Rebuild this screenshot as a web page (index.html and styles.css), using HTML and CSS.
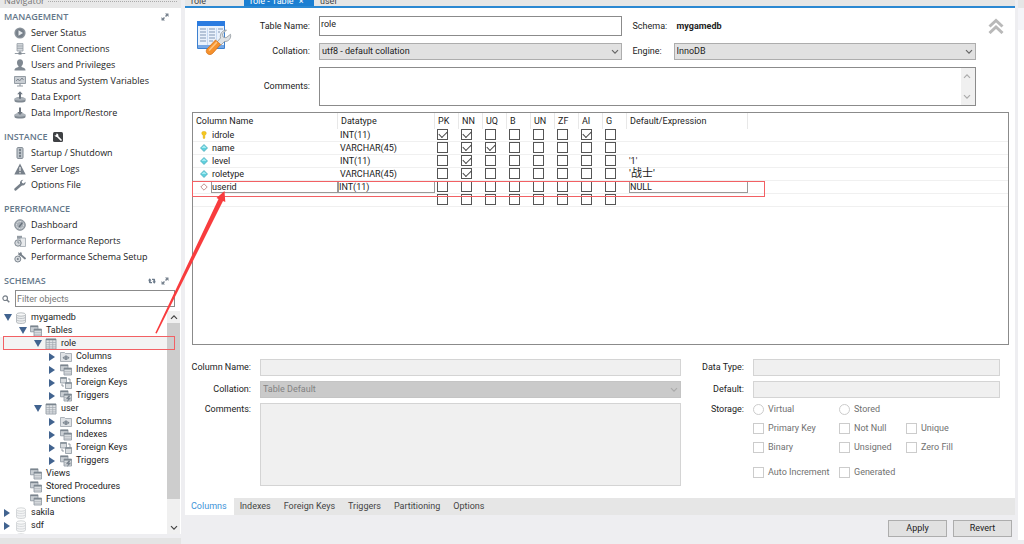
FILE: index.html
```html
<!DOCTYPE html>
<html lang="en">
<head>
  <meta charset="UTF-8">
  <meta name="viewport" content="width=device-width, initial-scale=1.0">
  <title>role - Table</title>
  <link rel="stylesheet" href="styles.css">
</head>
<body>
  <!-- icon set -->
  <svg class="sprite" aria-hidden="true">
    <symbol id="i-play" viewBox="0 0 12 12"><circle cx="6" cy="6" r="5.6" fill="#8c949c"/><circle cx="6" cy="6" r="4.2" fill="#77808a"/><path d="M4.500 3.200v5.600L9 6z" fill="#e8ebee"/></symbol>
    <symbol id="i-client" viewBox="0 0 12 12"><path d="M3 .6h6v7.400H3z" fill="#d5d9dd" stroke="#949ca4" stroke-width=".8"/><path d="M3 3h6M3 5.300h6" stroke="#949ca4" stroke-width=".8"/><path d="M6 8v2M.8 10.500h10.400" stroke="#949ca4" stroke-width="1.200"/><path d="M4.500 9.300h3v2.300h-3z" fill="#7f8891"/></symbol>
    <symbol id="i-user" viewBox="0 0 12 12"><path d="M6 .3c2 0 3 1.300 3 3.200C9 5.300 8.300 6.300 7.500 7v1c1.800.5 4 .9 4 3.500H.5c0-2.600 2.200-3 4-3.500V7C3.700 6.300 3 5.300 3 3.500 3 1.600 4 .3 6 .3z" fill="#7f8891"/></symbol>
    <symbol id="i-monitor" viewBox="0 0 12 12"><path d="M.5 1.500h11v7H.5z" fill="#c9ced3" stroke="#949ca4"/><path d="M2 6l2-2 1.500 2L8 3l1.500 2" fill="none" stroke="#77808a" stroke-width=".9"/><path d="M6 9v1.500M3 11h6" stroke="#949ca4" stroke-width="1.200"/></symbol>
    <symbol id="i-export" viewBox="0 0 12 12"><path d="M.5 8c0-2.300 11-2.300 11 0v2c0 2-11 2-11 0z" fill="#7f8891"/><ellipse cx="6" cy="8" rx="5.500" ry="1.700" fill="#aab1b8"/><path d="M6 .2l2.800 3H7v4.500H5V3.200H3.200z" fill="#6d7680"/></symbol>
    <symbol id="i-import" viewBox="0 0 12 12"><path d="M.5 8c0-2.300 11-2.300 11 0v2c0 2-11 2-11 0z" fill="#7f8891"/><ellipse cx="6" cy="8" rx="5.500" ry="1.700" fill="#aab1b8"/><path d="M6 8l2.800-3H7V.4H5V5H3.200z" fill="#6d7680"/></symbol>
    <symbol id="i-light" viewBox="0 0 12 12"><rect x="3" y=".6" width="6" height="10.800" rx="1" fill="#c3c9cf" stroke="#7f8891"/><circle cx="6" cy="3" r="1.200" fill="#77808a"/><circle cx="6" cy="6" r="1.200" fill="#77808a"/><circle cx="6" cy="9" r="1.200" fill="#77808a"/></symbol>
    <symbol id="i-warn" viewBox="0 0 12 12"><path d="M6 .5l5.700 11H.3z" fill="#77808a"/><path d="M6 4v4" stroke="#eee" stroke-width="1.300"/><circle cx="6" cy="9.700" r=".8" fill="#eee"/></symbol>
    <symbol id="i-wrench" viewBox="0 0 12 12"><path d="M1.600 10.300L7 5.500" stroke="#77808a" stroke-width="2.600" stroke-linecap="round"/><path d="M9.300.7L7.700 2.500l.4 1.500 1.500.4 1.900-1.600c.4 2-.9 3.800-3 3.700C6.200 6.400 5.500 4.400 6.200 2.700 6.800 1.400 8 .6 9.300.7z" fill="#77808a"/></symbol>
    <symbol id="i-gauge" viewBox="0 0 12 12"><circle cx="6" cy="6" r="5.300" fill="#a9b0b7" stroke="#7f8891" stroke-width=".9"/><circle cx="6" cy="6" r="3.500" fill="none" stroke="#eceef0" stroke-width="1" stroke-dasharray="1 .8"/><path d="M5 8l3.500-4.500" stroke="#66707a" stroke-width="1.300"/></symbol>
    <symbol id="i-report" viewBox="0 0 12 12"><path d="M3 .8h5v3H3z" fill="#949ca4"/><path d="M6 3h5.500v8.500H6z" fill="#e8eaec" stroke="#a0a7ae" stroke-width=".8"/><circle cx="4" cy="8" r="3.200" fill="#d5d9dd" stroke="#7f8891"/><path d="M4 6v2h1.500" fill="none" stroke="#77808a" stroke-width=".8"/></symbol>
    <symbol id="i-setup" viewBox="0 0 12 12"><circle cx="3.800" cy="8" r="3" fill="#d5d9dd" stroke="#7f8891"/><circle cx="3.800" cy="8" r="1" fill="#77808a"/><path d="M6.500 3.500l4.500 4" stroke="#77808a" stroke-width="1.800" stroke-linecap="round"/><path d="M4.500 1l1.200 1.300L7 .7 8 3 6.500 5 4.300 4z" fill="#77808a"/></symbol>
    <symbol id="i-expand" viewBox="0 0 8 8"><path d="M4 .5h3.500V4L6.300 2.800 5 4 4 3l1.200-1.300zM4 7.500H.5V4l1.200 1.200L3 4l1 1-1.200 1.300z" fill="#77828e"/></symbol>
    <symbol id="i-refresh" viewBox="0 0 9 8"><path d="M0 3.500L2 1l2 2.500H3V5h1.500v1.500H2.200C1.400 6.500 1 6 1 5.200V3.500zM9 4.500L7 7 5 4.500h1V3H4.500V1.500h2.300C7.600 1.500 8 2 8 2.800v1.700z" fill="#6b7a8a"/></symbol>
    <symbol id="i-badge" viewBox="0 0 10 10"><rect width="10" height="10" rx="1.500" fill="#3f4144"/><path d="M4 4l4 4" stroke="#fff" stroke-width="1.700" stroke-linecap="round"/><path d="M1.500 3L3 3.500 3.500 1.500C5 1.500 6 3 5.200 4.500 4 5.500 2 5 1.500 3z" fill="#fff"/></symbol>
    <symbol id="i-search" viewBox="0 0 8 8"><circle cx="3.200" cy="3.200" r="2.300" fill="none" stroke="#777f88" stroke-width="1.200"/><path d="M5 5l2.300 2.300" stroke="#777f88" stroke-width="1.500"/></symbol>
    <symbol id="i-db" viewBox="0 0 12 12"><path d="M1.500 2.500v7.500c0 2 9 2 9 0V2.500" fill="#eceeef" stroke="#a9aeb3" stroke-width=".8"/><ellipse cx="6" cy="2.500" rx="4.500" ry="1.700" fill="#f7f8f8" stroke="#a9aeb3" stroke-width=".8"/><path d="M1.500 5c0 2 9 2 9 0M1.500 7.500c0 2 9 2 9 0" fill="none" stroke="#b4b9be" stroke-width=".8"/></symbol>
    <symbol id="i-tables" viewBox="0 0 12 12"><path d="M.5.8h7.500v6H.5z" fill="#c9ced3" stroke="#8c959e" stroke-width=".8"/><path d="M.5 1.500H8" stroke="#7b858f" stroke-width="1.300"/><path d="M4 4h7.500v7H4z" fill="#d9dde0" stroke="#8c959e" stroke-width=".8"/><path d="M4 4.800h7.500" stroke="#7b858f" stroke-width="1.500"/><path d="M4 7.500h7.500M4 9.300h7.500" stroke="#a0a7ae" stroke-width=".5"/></symbol>
    <symbol id="i-table" viewBox="0 0 12 12"><path d="M1 1h10v10H1z" fill="#e0e3e6" stroke="#939ca5" stroke-width=".9"/><path d="M1 1.500h10" stroke="#7b858f" stroke-width="1.500"/><path d="M1 4.500h10M1 6.700h10M1 8.900h10M4.300 2v9M7.700 2v9" stroke="#a0a8b0" stroke-width=".7"/></symbol>
    <symbol id="i-cols" viewBox="0 0 12 12"><path d="M.5 1.500h4l1 1h6v8H.5z" fill="#dfe2e5" stroke="#9aa2aa" stroke-width=".8"/><path d="M2.500 6.700L4.700 4.700v4zM5.100 4.500h1.800V9H5.100zM9.500 6.700l-2.200-2v4z" fill="#7b858f"/></symbol>
    <symbol id="i-fk" viewBox="0 0 12 12"><path d="M.5.5h6v5.500h-6zM5.500 5.500h6v6h-6z" fill="#d9dde0" stroke="#8c959e" stroke-width=".8"/><path d="M.5 1.200h6M5.500 6.200h6" stroke="#7b858f" stroke-width="1.300"/><path d="M8 2h2v3M4 9H2V7" fill="none" stroke="#7b858f" stroke-width=".8"/></symbol>
    <symbol id="i-trigger" viewBox="0 0 12 12"><use href="#i-tables"/><path d="M8.500 5.500L6 9h2l-1 3 4-4H9l1.500-2.500z" fill="#7b858f"/></symbol>
    <symbol id="i-chev" viewBox="0 0 8 6"><path d="M1 1.200l3 3 3-3" fill="none" stroke="currentColor" stroke-width="1.200"/></symbol>
    <symbol id="i-key" viewBox="0 0 8 9"><path d="M4 .3c1.700 0 2.600 1 2.600 2.300C6.600 3.700 5.800 4.500 5 4.800V8L4 8.900 3 8V4.800C2.200 4.500 1.400 3.700 1.400 2.600 1.400 1.300 2.300.3 4 .3z" fill="#f4c61f" stroke="#d8a512" stroke-width=".4"/></symbol>
    <symbol id="i-gem" viewBox="0 0 8 8"><path d="M4 .5L7.500 4 4 7.500.5 4z" fill="#5fd0dd" stroke="#3fa3b5" stroke-width=".7"/><path d="M4 1.500L6.500 4H1.500z" fill="#a5ecf3"/></symbol>
    <symbol id="i-gem-empty" viewBox="0 0 8 8"><path d="M4 .8L7.200 4 4 7.200.8 4z" fill="#fff" stroke="#b98482" stroke-width=".9"/></symbol>
  </svg>

  <div class="workbench">
    <aside class="sidebar">
      <div class="panel-title"><span>Navigator</span><i></i></div>

      <nav class="nav">
        <section class="nav-group">
          <h2>MANAGEMENT <svg class="nav-tool"><use href="#i-expand"/></svg></h2>
          <a href="#"><svg><use href="#i-play"/></svg>Server Status</a>
          <a href="#"><svg><use href="#i-client"/></svg>Client Connections</a>
          <a href="#"><svg><use href="#i-user"/></svg>Users and Privileges</a>
          <a href="#"><svg><use href="#i-monitor"/></svg>Status and System Variables</a>
          <a href="#"><svg><use href="#i-export"/></svg>Data Export</a>
          <a href="#"><svg><use href="#i-import"/></svg>Data Import/Restore</a>
        </section>
        <section class="nav-group">
          <h2>INSTANCE <svg class="nav-badge"><use href="#i-badge"/></svg></h2>
          <a href="#"><svg><use href="#i-light"/></svg>Startup / Shutdown</a>
          <a href="#"><svg><use href="#i-warn"/></svg>Server Logs</a>
          <a href="#"><svg><use href="#i-wrench"/></svg>Options File</a>
        </section>
        <section class="nav-group">
          <h2>PERFORMANCE</h2>
          <a href="#"><svg><use href="#i-gauge"/></svg>Dashboard</a>
          <a href="#"><svg><use href="#i-report"/></svg>Performance Reports</a>
          <a href="#"><svg><use href="#i-setup"/></svg>Performance Schema Setup</a>
        </section>
        <h2>SCHEMAS <svg class="nav-tool"><use href="#i-refresh"/></svg><svg><use href="#i-expand"/></svg></h2>
      </nav>

      <div class="filter">
        <svg><use href="#i-search"/></svg>
        <input type="text" placeholder="Filter objects" aria-label="Filter objects">
      </div>

      <div class="tree-pane">
        <ul class="tree">
          <li>
            <div class="node open"><svg><use href="#i-db"/></svg>mygamedb</div>
            <ul>
              <li>
                <div class="node open"><svg><use href="#i-tables"/></svg>Tables</div>
                <ul>
                  <li>
                    <div class="node open selected"><svg><use href="#i-table"/></svg>role</div>
                    <ul>
                      <li><div class="node closed"><svg><use href="#i-cols"/></svg>Columns</div></li>
                      <li><div class="node closed"><svg><use href="#i-tables"/></svg>Indexes</div></li>
                      <li><div class="node closed"><svg><use href="#i-fk"/></svg>Foreign Keys</div></li>
                      <li><div class="node closed"><svg><use href="#i-trigger"/></svg>Triggers</div></li>
                    </ul>
                  </li>
                  <li>
                    <div class="node open"><svg><use href="#i-table"/></svg>user</div>
                    <ul>
                      <li><div class="node closed"><svg><use href="#i-cols"/></svg>Columns</div></li>
                      <li><div class="node closed"><svg><use href="#i-tables"/></svg>Indexes</div></li>
                      <li><div class="node closed"><svg><use href="#i-fk"/></svg>Foreign Keys</div></li>
                      <li><div class="node closed"><svg><use href="#i-trigger"/></svg>Triggers</div></li>
                    </ul>
                  </li>
                </ul>
              </li>
              <li><div class="node"><svg><use href="#i-tables"/></svg>Views</div></li>
              <li><div class="node"><svg><use href="#i-tables"/></svg>Stored Procedures</div></li>
              <li><div class="node"><svg><use href="#i-tables"/></svg>Functions</div></li>
            </ul>
          </li>
          <li><div class="node closed faded"><svg><use href="#i-db"/></svg>sakila</div></li>
          <li><div class="node closed faded"><svg><use href="#i-db"/></svg>sdf</div></li>
          <li><div class="node faded"><svg><use href="#i-db"/></svg></div></li>
        </ul>
        <div class="scrollbar">
          <svg class="up"><use href="#i-chev"/></svg>
          <div class="thumb"></div>
          <svg><use href="#i-chev"/></svg>
        </div>
      </div>
      <div class="panel-foot"></div>
    </aside>

    <main class="editor">
      <div class="doc-tabs">
        <span class="doc-tab">role</span>
        <span class="doc-tab active">role - Table <b>×</b></span>
        <span class="doc-tab">user</span>
      </div>

      <div class="editor-body">
        <form class="table-form">
          <svg class="table-icon" viewBox="0 0 36 36">
            <path d="M1.500 1.500h27v27h-27z" fill="#eaf2fc" stroke="#3d80cf"/>
            <path d="M1 1h28v5H1z" fill="#2a7be0"/>
            <path d="M2 25h26v3H2z" fill="#76a8e6"/>
            <path d="M4 9h6M4 12h6M4 15h6M4 18h6M4 21h6M13 9h6M13 12h6M13 15h6M13 18h6M13 21h4M22 9h5M22 12h2" stroke="#a4b5cc" stroke-width="1.700"/>
            <path d="M11.500 8v17M20.500 8v12" stroke="#c6d9f2"/>
            <path d="M30.500 10l-4 4 .5 3 3 .8 4.500-3.500c1 4-2 7.500-6 7.200l-4 4-3.500-3.500 3.500-4c-1-4 2-8 6-8z" fill="#dfe2e5" stroke="#8e959c" stroke-width=".8"/>
            <path d="M19.500 20l5 4.500-8 9c-3.500 3-8-1-5.500-4.500z" fill="#f6912c" stroke="#d36d12" stroke-width=".8"/>
            <path d="M13.500 30l7-7.500" stroke="#ffc37d" stroke-width="1.700" stroke-linecap="round"/>
          </svg>
          <label class="l-name" for="table-name">Table Name:</label>
          <input class="box tall" type="text" id="table-name" value="role">
          <span class="l-side">Schema:</span>
          <strong>mygamedb</strong>
          <svg class="collapse" viewBox="0 0 16 16"><path d="M1.500 8.500L8 2.500l6.500 6M1.500 15L8 9l6.500 6" fill="none" stroke="#b9b9b9" stroke-width="3"/></svg>
          <label class="l-name" for="collation">Collation:</label>
          <div class="select">
            <select id="collation"><option>utf8 - default collation</option></select>
            <svg><use href="#i-chev"/></svg>
          </div>
          <label class="l-side" for="engine">Engine:</label>
          <div class="select">
            <select id="engine"><option>InnoDB</option></select>
            <svg><use href="#i-chev"/></svg>
          </div>
          <label class="l-name" for="comments">Comments:</label>
          <div class="comments">
            <textarea id="comments"></textarea>
            <div class="mini-scroll">
              <svg class="up"><use href="#i-chev"/></svg>
              <svg><use href="#i-chev"/></svg>
            </div>
          </div>
        </form>

        <div class="grid-box">
          <table class="columns">
            <colgroup>
              <col class="c-name"><col class="c-type">
              <col class="c-flag"><col class="c-flag"><col class="c-flag"><col class="c-flag">
              <col class="c-flag"><col class="c-flag"><col class="c-flag"><col class="c-flag">
              <col class="c-default"><col>
            </colgroup>
            <thead>
              <tr><th>Column Name</th><th>Datatype</th><th>PK</th><th>NN</th><th>UQ</th><th>B</th><th>UN</th><th>ZF</th><th>AI</th><th>G</th><th>Default/Expression</th><th></th></tr>
            </thead>
            <tbody>
              <tr>
                <td><div class="col-name"><svg><use href="#i-key"/></svg>idrole</div></td><td>INT(11)</td>
                <td><input type="checkbox" aria-label="PK" checked></td>
                <td><input type="checkbox" aria-label="NN" checked></td>
                <td><input type="checkbox" aria-label="UQ"></td>
                <td><input type="checkbox" aria-label="B"></td>
                <td><input type="checkbox" aria-label="UN"></td>
                <td><input type="checkbox" aria-label="ZF"></td>
                <td><input type="checkbox" aria-label="AI" checked></td>
                <td><input type="checkbox" aria-label="G"></td>
                <td></td><td></td>
              </tr>
              <tr>
                <td><div class="col-name"><svg><use href="#i-gem"/></svg>name</div></td><td>VARCHAR(45)</td>
                <td><input type="checkbox" aria-label="PK"></td>
                <td><input type="checkbox" aria-label="NN" checked></td>
                <td><input type="checkbox" aria-label="UQ" checked></td>
                <td><input type="checkbox" aria-label="B"></td>
                <td><input type="checkbox" aria-label="UN"></td>
                <td><input type="checkbox" aria-label="ZF"></td>
                <td><input type="checkbox" aria-label="AI"></td>
                <td><input type="checkbox" aria-label="G"></td>
                <td></td><td></td>
              </tr>
              <tr>
                <td><div class="col-name"><svg><use href="#i-gem"/></svg>level</div></td><td>INT(11)</td>
                <td><input type="checkbox" aria-label="PK"></td>
                <td><input type="checkbox" aria-label="NN" checked></td>
                <td><input type="checkbox" aria-label="UQ"></td>
                <td><input type="checkbox" aria-label="B"></td>
                <td><input type="checkbox" aria-label="UN"></td>
                <td><input type="checkbox" aria-label="ZF"></td>
                <td><input type="checkbox" aria-label="AI"></td>
                <td><input type="checkbox" aria-label="G"></td>
                <td>'1'</td><td></td>
              </tr>
              <tr>
                <td><div class="col-name"><svg><use href="#i-gem"/></svg>roletype</div></td><td>VARCHAR(45)</td>
                <td><input type="checkbox" aria-label="PK"></td>
                <td><input type="checkbox" aria-label="NN" checked></td>
                <td><input type="checkbox" aria-label="UQ"></td>
                <td><input type="checkbox" aria-label="B"></td>
                <td><input type="checkbox" aria-label="UN"></td>
                <td><input type="checkbox" aria-label="ZF"></td>
                <td><input type="checkbox" aria-label="AI"></td>
                <td><input type="checkbox" aria-label="G"></td>
                <td class="cjk">'战士'</td><td></td>
              </tr>
              <tr class="editing">
                <td><div class="col-name"><svg><use href="#i-gem-empty"/></svg><input type="text" aria-label="Column Name" value="userid"></div></td>
                <td><input type="text" aria-label="Datatype" value="INT(11)"></td>
                <td><input type="checkbox" aria-label="PK"></td>
                <td><input type="checkbox" aria-label="NN"></td>
                <td><input type="checkbox" aria-label="UQ"></td>
                <td><input type="checkbox" aria-label="B"></td>
                <td><input type="checkbox" aria-label="UN"></td>
                <td><input type="checkbox" aria-label="ZF"></td>
                <td><input type="checkbox" aria-label="AI"></td>
                <td><input type="checkbox" aria-label="G"></td>
                <td><input type="text" aria-label="Default/Expression" value="NULL"></td><td></td>
              </tr>
              <tr>
                <td></td><td></td>
                <td><input type="checkbox" aria-label="PK"></td>
                <td><input type="checkbox" aria-label="NN"></td>
                <td><input type="checkbox" aria-label="UQ"></td>
                <td><input type="checkbox" aria-label="B"></td>
                <td><input type="checkbox" aria-label="UN"></td>
                <td><input type="checkbox" aria-label="ZF"></td>
                <td><input type="checkbox" aria-label="AI"></td>
                <td><input type="checkbox" aria-label="G"></td>
                <td></td><td></td>
              </tr>
            </tbody>
          </table>
        </div>

        <form class="column-form">
          <div class="column-left">
            <label for="col-name">Column Name:</label>
            <input class="box" type="text" id="col-name" disabled>
            <label for="col-collation">Collation:</label>
            <div class="select">
              <select id="col-collation" disabled><option>Table Default</option></select>
              <svg><use href="#i-chev"/></svg>
            </div>
            <label for="col-comments" class="top">Comments:</label>
            <textarea class="box" id="col-comments" disabled></textarea>
          </div>
          <div class="column-right">
            <label for="data-type">Data Type:</label>
            <input class="box" type="text" id="data-type" disabled>
            <label for="default">Default:</label>
            <input class="box" type="text" id="default" disabled>
            <span class="top">Storage:</span>
            <div class="flags">
              <label><input type="radio" name="storage" disabled>Virtual</label>
              <label><input type="radio" name="storage" disabled>Stored</label>
              <span></span>
              <label><input type="checkbox" disabled>Primary Key</label>
              <label><input type="checkbox" disabled>Not Null</label>
              <label><input type="checkbox" disabled>Unique</label>
              <label><input type="checkbox" disabled>Binary</label>
              <label><input type="checkbox" disabled>Unsigned</label>
              <label><input type="checkbox" disabled>Zero Fill</label>
              <label><input type="checkbox" disabled>Auto Increment</label>
              <label><input type="checkbox" disabled>Generated</label>
            </div>
          </div>
        </form>
      </div>

      <nav class="page-tabs">
        <a href="#" class="active">Columns</a>
        <a href="#">Indexes</a>
        <a href="#">Foreign Keys</a>
        <a href="#">Triggers</a>
        <a href="#">Partitioning</a>
        <a href="#">Options</a>
      </nav>
      <footer class="actions">
        <button type="button">Apply</button>
        <button type="button">Revert</button>
      </footer>
    </main>

    <aside class="side-output"></aside>
  </div>

  <!-- annotation marks drawn over the window -->
  <div class="mark mark-role"></div>
  <div class="mark mark-userid"></div>
  <svg class="arrow" viewBox="0 0 80 150"><path d="M5.300 143L68.500 9l-2-1L74.500 1l.8 11-2.300-1L6.700 143.600z" fill="#f83c3e"/></svg>
</body>
</html>
```

FILE: styles.css
```css
* {
  box-sizing: border-box;
}
body {
  margin: 0;
  height: 100vh;
  overflow: hidden;
  position: relative;
  font-family: Roboto, "Noto Sans CJK SC", sans-serif;
  font-size: 9px;
  line-height: 13px;
  color: #222;
  background-color: #eeeef1;
}
input, select, textarea, button {
  font: inherit;
  color: inherit;
  margin: 0;
  border-radius: 0;
}
a {
  color: inherit;
  text-decoration: none;
}
ul {
  list-style: none;
  margin: 0;
  padding: 0;
}
svg {
  flex: none;
}
.sprite {
  position: absolute;
  width: 0;
  height: 0;
}
.workbench {
  display: flex;
  height: 100%;
}

/* navigator */
.sidebar {
  width: 181px;
  margin-right: 4px;
  display: flex;
  flex-direction: column;
  background-color: #fff;
}
.panel-title {
  height: 8px;
  padding: 0 4px;
  display: flex;
  align-items: flex-end;
  gap: 3px;
  line-height: 11px;
  font-family: "Open Sans", sans-serif;
  color: #777;
  background-color: #e8e8e8;
}
.panel-title span {
  margin-bottom: 2px;
}
.panel-title i {
  flex: 1;
  height: 7px;
  border-top: 1px dotted #aaa;
}
.nav {
  padding: 1px 12px 0 4px;
  font-family: "Open Sans", sans-serif;
}
.nav-group {
  margin-bottom: 8px;
}
.nav h2 {
  display: flex;
  align-items: center;
  gap: 5px;
  height: 16px;
  margin: 0;
  font-size: 9px;
  font-weight: 600;
  line-height: 12px;
  color: #64778a;
}
.nav h2 svg {
  width: 8px;
  height: 8px;
}
.nav h2 .nav-tool {
  margin-left: auto;
}
.nav h2 .nav-badge {
  width: 10px;
  height: 10px;
}
.nav a {
  display: flex;
  align-items: center;
  gap: 5px;
  height: 16px;
  padding-left: 10px;
  line-height: 12px;
  white-space: nowrap;
}
.nav a svg {
  width: 12px;
  height: 12px;
}
.filter {
  display: flex;
  align-items: center;
  gap: 5px;
  margin: 1px 6px 4px 2px;
}
.filter svg {
  width: 8px;
  height: 8px;
}
.filter input {
  flex: 1;
  min-width: 0;
  height: 17px;
  padding: 0 1px;
  border: 1px solid #8b8b8b;
}
.filter input::placeholder {
  color: #777;
}
.tree-pane {
  flex: 1;
  min-height: 0;
  display: flex;
  overflow: hidden;
}
.tree {
  flex: 1;
}
.tree ul .node {
  padding-left: 19px;
}
.tree ul ul .node {
  padding-left: 34px;
}
.tree ul ul ul .node {
  padding-left: 49px;
}
.node {
  display: flex;
  align-items: center;
  height: 13px;
  padding-left: 4px;
  white-space: nowrap;
}
.node svg {
  width: 12px;
  height: 12px;
  margin-right: 4px;
}
.node::before {
  content: "";
  flex: none;
  width: 0;
  margin-right: 11px;
}
.node.open::before {
  border: 4px solid transparent;
  border-top: 7px solid #41638f;
  border-bottom: 0;
  margin-right: 3px;
}
.node.closed::before {
  border: 4px solid transparent;
  border-left: 6px solid #41638f;
  border-right: 0;
  margin-right: 5px;
}
.node.selected {
  background-color: #f3f3f3;
}
.node.faded svg {
  opacity: 0.6;
}
.scrollbar {
  width: 13px;
  margin-right: 1px;
  display: flex;
  flex-direction: column;
  align-items: center;
  background-color: #f0f0f0;
}
.scrollbar svg {
  width: 8px;
  height: 6px;
  margin: 3px 0;
  color: #444;
}
.up {
  transform: rotate(180deg);
}
.thumb {
  width: 100%;
  height: 79%;
  margin-bottom: auto;
  background-color: #cdcdcd;
}
.panel-foot {
  height: 10px;
  border-top: 4px solid #eeeef1;
  background-color: #e4e4e4;
}

/* editor */
.editor {
  flex: 1;
  min-width: 0;
  display: flex;
  flex-direction: column;
}
.doc-tabs {
  display: flex;
  align-items: flex-end;
  height: 8px;
  border-bottom: 2px solid #2b88d2;
  line-height: 9px;
  background-color: #e6e6e6;
}
.doc-tab {
  min-width: 59px;
  padding: 0 6px;
  white-space: nowrap;
  color: #444;
}
.doc-tab.active {
  min-width: 70px;
  color: #fff;
  background-color: #1b7fd2;
}
.doc-tab b {
  margin-left: 3px;
  font-weight: 400;
}
.editor-body {
  flex: 1;
  display: flex;
  flex-direction: column;
  padding-left: 7px;
  background-color: #fff;
}
.table-form {
  display: grid;
  grid-template-columns: 49px 60px 1fr 34px 1fr 30px;
  column-gap: 9px;
  row-gap: 7px;
  align-items: center;
  padding-top: 8px;
}
.table-icon {
  grid-row: 1 / 4;
  align-self: start;
  width: 36px;
  height: 36px;
  margin: 4px 0 0 4px;
}
.l-name {
  grid-column: 2;
  text-align: right;
}
.l-side {
  padding-left: 2px;
}
.table-form strong {
  padding-left: 3px;
}
.collapse {
  width: 16px;
  height: 16px;
  margin-left: 3px;
}
.box {
  width: 100%;
  height: 17px;
  padding: 0 2px;
  border: 1px solid #8b8b8b;
  background-color: #fff;
}
.box.tall {
  height: 20px;
  padding: 0 1px 4px;
}
.box:disabled {
  border-color: #d4d4d4;
  background-color: #f0f0f0;
}
.select {
  position: relative;
}
.select select {
  display: block;
  appearance: none;
  width: 100%;
  height: 17px;
  padding: 0 2px;
  border: 1px solid #adadad;
  background-color: #e1e1e1;
}
.select select:disabled {
  color: #838383;
  opacity: 1;
  border-color: #c4c4c4;
  background-color: #cacaca;
}
.select svg {
  position: absolute;
  right: 3px;
  top: 6px;
  width: 8px;
  height: 6px;
  color: #666;
  pointer-events: none;
}
.select select:disabled + svg {
  color: #aaa;
}
textarea {
  display: block;
  resize: none;
}
.comments {
  grid-column: 3 / 6;
  display: flex;
  height: 39px;
  border: 1px solid #8b8b8b;
}
.comments textarea {
  flex: 1;
  border: 0;
}
.mini-scroll {
  display: flex;
  flex-direction: column;
  justify-content: space-between;
  width: 14px;
  padding: 5px 2px;
  background-color: #f0f0f0;
}
.mini-scroll svg {
  width: 8px;
  height: 6px;
  color: #aaa;
}

/* column list */
.grid-box {
  flex: 1;
  margin: 6px 6px 0 0;
  border: 1px solid #8b8b8b;
}
.columns {
  width: 100%;
  table-layout: fixed;
  border-collapse: separate;
  border-spacing: 0;
}
.c-name {
  width: 145px;
}
.c-type {
  width: 97px;
}
.c-flag {
  width: 24px;
}
.c-default {
  width: 121px;
}
.columns th {
  height: 16px;
  padding: 0 3px;
  border-right: 1px solid #e8e8e8;
  font-weight: 400;
  text-align: left;
  white-space: nowrap;
}
.columns th:last-child {
  border-right: 0;
}
.columns td {
  height: 13px;
  padding: 0 2px;
  line-height: 12px;
  border-bottom: 1px solid #f0f0f0;
}
.columns .cjk {
  font-size: 11px;
}
.columns input[type="checkbox"] {
  margin-bottom: 1px;
}
.col-name {
  display: flex;
  align-items: center;
  gap: 4px;
  padding-left: 5px;
}
.col-name svg {
  width: 8px;
  height: 8px;
}
.editing input[type="text"] {
  display: block;
  width: 100%;
  height: 12px;
  min-width: 0;
  padding: 0;
  border: 1px solid #999;
}
.columns .editing td {
  padding: 0;
}
.columns .editing td:nth-child(n+3) {
  padding-left: 2px;
}
.editing .col-name {
  gap: 3px;
  padding-left: 7px;
}
input[type="checkbox"] {
  appearance: none;
  flex: none;
  display: block;
  position: relative;
  width: 11px;
  height: 11px;
  border: 1px solid #555;
  background-color: #fff;
}
input[type="checkbox"]:checked::after {
  content: "";
  position: absolute;
  left: 1px;
  top: 1px;
  width: 7px;
  height: 4px;
  border-left: 1px solid #444;
  border-bottom: 1px solid #444;
  transform: rotate(-45deg);
}
input[type="radio"] {
  appearance: none;
  width: 11px;
  height: 11px;
  border: 1px solid #ccc;
  border-radius: 50%;
}
input[type="checkbox"]:disabled {
  border-color: #ccc;
}

/* column details */
.column-form {
  display: grid;
  grid-template-columns: 489px 1fr;
  padding: 14px 15px 12px 0;
}
.column-left, .column-right {
  display: grid;
  grid-template-columns: 59px 1fr;
  grid-template-rows: 17px 17px 83px;
  gap: 5px 9px;
  align-items: center;
  justify-items: end;
  white-space: nowrap;
}
.column-right {
  grid-template-columns: 63px 1fr;
}
.column-form .select, .flags {
  width: 100%;
}
.column-left textarea {
  height: 83px;
}
.column-form .top {
  align-self: start;
}
.flags {
  display: grid;
  grid-template-columns: 86px 67px 1fr;
  grid-template-rows: 13px 13px 13px 13px;
  row-gap: 6px;
  align-self: start;
}
.flags label {
  display: flex;
  align-items: center;
  gap: 4px;
  color: #707070;
}
.flags label:nth-last-child(-n+2) {
  margin-top: 12px;
}

.page-tabs {
  display: flex;
  height: 17px;
  background-color: #e6e6e6;
}
.page-tabs a {
  padding: 2px 7px 2px 6px;
  color: #444;
}
.page-tabs .active {
  color: #3d93d8;
  background-color: #fff;
}
.actions {
  display: flex;
  justify-content: flex-end;
  align-items: flex-start;
  gap: 6px;
  height: 29px;
  padding: 5px 3px;
}
.actions button {
  width: 59px;
  height: 17px;
  padding: 0;
  border: 1px solid #adadad;
  background-color: #e1e1e1;
}
.side-output {
  width: 6px;
  margin: 0 0 4px 3px;
  border-top: 8px solid #e6e6e6;
  background: linear-gradient(#f4f4f8 22px, #fff 22px);
}

/* red marks */
.mark {
  position: absolute;
  border: 1px solid #f26064;
}
.mark-role {
  left: 3px;
  top: 336px;
  width: 172px;
  height: 14px;
}
.mark-userid {
  left: 192px;
  top: 181px;
  width: 573px;
  height: 16px;
}
.arrow {
  position: absolute;
  left: 150px;
  top: 190px;
  width: 80px;
  height: 150px;
}
```
